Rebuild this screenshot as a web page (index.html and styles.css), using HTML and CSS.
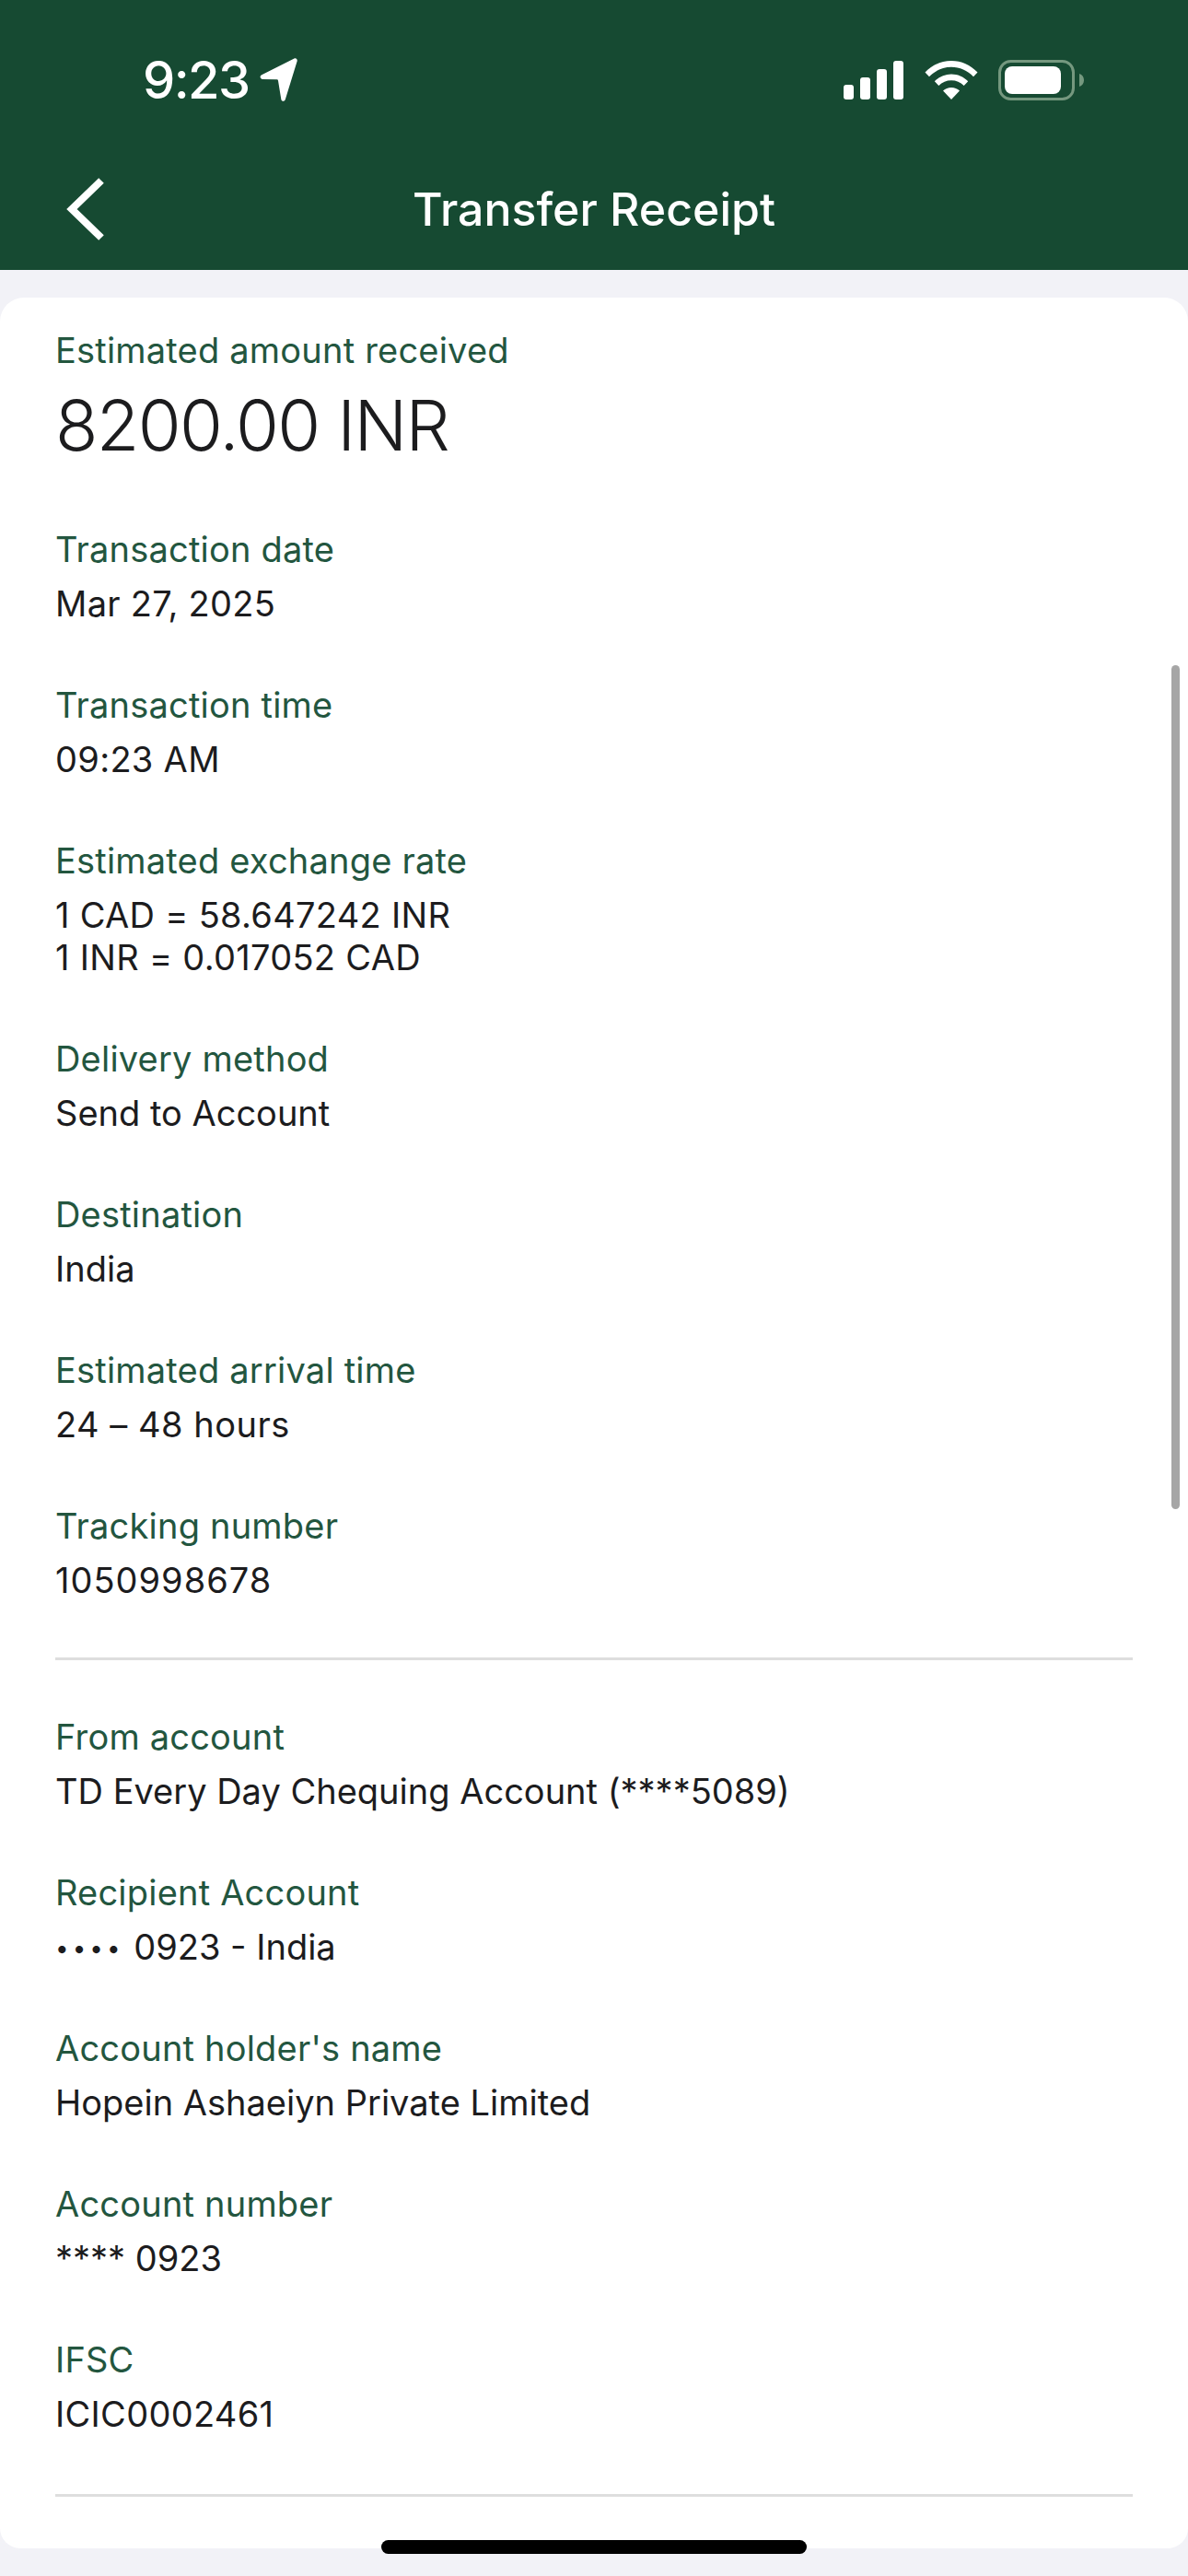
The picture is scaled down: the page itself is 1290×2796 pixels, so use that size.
FILE: index.html
```html
<!DOCTYPE html>
<html lang="en">
<head>
<meta charset="utf-8">
<title>Transfer Receipt</title>
<link rel="stylesheet" href="styles.css">
</head>
<body>
<div class="screen">
  <header class="header">
    <div class="status">
      <div class="status-left">
        <span class="time">9:23</span>
        <svg class="loc" viewBox="0 0 42 50" width="42" height="50"><path d="M38.5 1.6 3.2 19.2c-2.600 1.300-1.900 4.600 1 4.700l15.600.4c.7 0 1.100.4 1.200 1.100l3.300 20.300c.5 2.700 3.600 2.900 4.500.4L41.600 4.600c.7-2.200-1.200-3.900-3.100-3z" fill="#fff"/></svg>
      </div>
      <div class="status-right">
        <svg class="signal" viewBox="0 0 66 42" width="66" height="42"><rect x="0" y="26" width="11" height="16" rx="3" fill="#fff"/><rect x="18" y="18" width="11" height="24" rx="3" fill="#fff"/><rect x="36" y="9" width="11" height="33" rx="3" fill="#fff"/><rect x="54" y="0" width="11" height="42" rx="3" fill="#fff"/></svg>
        <svg class="wifi" viewBox="0 0 58 42" width="58" height="42"><path d="M29 0C18 0 8.300 4.400 0.500 12.500L5 17.200C11.500 10.600 19.800 6.800 29 6.800S46.500 10.600 53 17.200L57.500 12.500C49.700 4.400 40 0 29 0Z" fill="#fff"/><path d="M29 14.500C22.300 14.500 15.800 17.200 10.800 22.200L15.300 26.900C19 23.300 23.800 21.300 29 21.300S39 23.300 42.700 26.900L47.200 22.200C42.200 17.200 35.700 14.500 29 14.500Z" fill="#fff"/><path d="M29 29C25.500 29 22.500 30.300 20 32.600L29 42 38 32.600C35.500 30.300 32.500 29 29 29Z" fill="#fff"/></svg>
        <svg class="battery" viewBox="0 0 94 44" width="94" height="44"><rect x="1.500" y="1.500" width="80" height="41" rx="12" fill="none" stroke="#75987f" stroke-width="3"/><rect x="7" y="7" width="61" height="30" rx="8" fill="#fff"/><path d="M88 15c3 1 5 3.500 5 7s-2 6-5 7z" fill="#75987f"/></svg>
      </div>
    </div>
    <div class="nav">
      <svg class="back" viewBox="0 0 42 68" width="42" height="68"><path d="M38 3 6 34l32 31" fill="none" stroke="#fff" stroke-width="8"/></svg>
      <h1 class="title">Transfer Receipt</h1>
    </div>
  </header>
  <main class="card">
    <section class="block">
      <div class="hero">
        <div class="label">Estimated amount received</div>
        <div class="amount">8200.00 INR</div>
      </div>
      <div class="item"><div class="label">Transaction date</div><div class="value value-wide">Mar 27, 2025</div></div>
      <div class="item"><div class="label">Transaction time</div><div class="value value-wide">09:23 AM</div></div>
      <div class="item"><div class="label">Estimated exchange rate</div><div class="value value-wide">1 CAD = 58.647242 INR</div><div class="value value-wide value-next">1 INR = 0.017052 CAD</div></div>
      <div class="item"><div class="label">Delivery method</div><div class="value">Send to Account</div></div>
      <div class="item"><div class="label">Destination</div><div class="value">India</div></div>
      <div class="item"><div class="label">Estimated arrival time</div><div class="value value-wider">24 – 48 hours</div></div>
      <div class="item"><div class="label">Tracking number</div><div class="value value-digits">1050998678</div></div>
    </section>
    <hr class="rule">
    <section class="block">
      <div class="item"><div class="label">From account</div><div class="value">TD Every Day Chequing Account (****5089)</div></div>
      <div class="item"><div class="label">Recipient Account</div><div class="value"><span class="dots">••••</span> 0923 - India</div></div>
      <div class="item"><div class="label">Account holder's name</div><div class="value">Hopein Ashaeiyn Private Limited</div></div>
      <div class="item"><div class="label">Account number</div><div class="value">**** 0923</div></div>
      <div class="item"><div class="label">IFSC</div><div class="value value-wide">ICIC0002461</div></div>
    </section>
    <hr class="rule rule-end">
    <div class="scrollbar"></div>
  </main>
  <div class="home-bar"></div>
</div>
</body>
</html>
```
FILE: styles.css
```css
* { box-sizing: border-box; }
html, body { margin: 0; padding: 0; }
body { width: 1290px; height: 2796px; overflow: hidden; background: #f2f2f7; font-family: Inter, "Liberation Sans", sans-serif; }
.screen { position: relative; width: 1290px; height: 2796px; display: flex; flex-direction: column; }
.header { height: 293px; background: #164a32; color: #fff; flex: none; }
.status { height: 198px; padding: 60px 112px 0 155px; display: flex; justify-content: space-between; align-items: flex-start; }
.status-left { display: flex; align-items: center; gap: 11px; height: 54px; }
.time { font-size: 56px; line-height: 54px; font-weight: 500; letter-spacing: -1.6px; }
.status-right { display: flex; align-items: center; gap: 22px; height: 54px; }
.nav { position: relative; height: 58px; display: flex; justify-content: center; align-items: center; }
.back { position: absolute; left: 72px; top: -5px; }
.title { margin: 0; font-size: 50px; line-height: 58px; font-weight: 500; }
.card { position: relative; margin-top: 30px; height: 2443px; background: #fff; border-radius: 26px 26px 22px 22px; padding: 34px 60px 0; }
.block { display: flex; flex-direction: column; gap: 64px; }
.hero { margin-bottom: 3px; }
.label { font-size: 38px; line-height: 46px; color: #23563f; letter-spacing: .2px; }
.amount { margin-top: 16px; margin-bottom: 3px; font-size: 76px; line-height: 84px; font-weight: 300; color: #1c1c1e; letter-spacing: -1.7px; }
.value { margin-top: 13px; font-size: 38px; line-height: 46px; color: #1c1c1e; }
.value-wide { letter-spacing: .3px; }
.value-wider { letter-spacing: .5px; }
.value-digits { letter-spacing: 1px; }
.value-next { margin-top: 0; }
.dots { font-size: 26px; line-height: 0; letter-spacing: 4px; vertical-align: 3px; }
.rule { margin: 61px 0 60px; height: 3px; border: 0; background: #dedede; }
.rule-end { margin-top: 64px; }
.scrollbar { position: absolute; top: 399px; right: 9px; width: 9px; height: 916px; border-radius: 5px; background: #a6a6a6; }
.home-bar { position: absolute; left: 414px; top: 2757px; width: 462px; height: 15px; border-radius: 8px; background: #000; }
```
